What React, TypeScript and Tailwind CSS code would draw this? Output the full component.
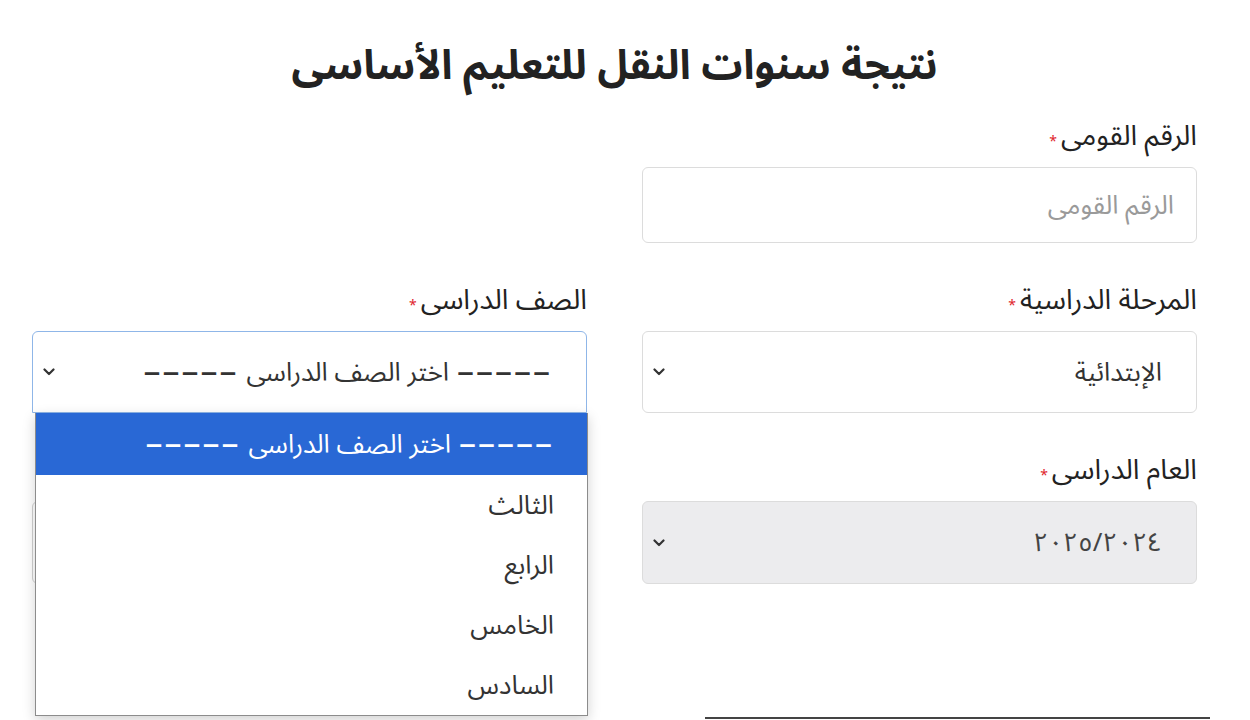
import React from "react";

const font = { fontFamily: '"Noto Sans Arabic", "DejaVu Sans", sans-serif' };

function Chevron() {
  return (
    <svg width="12" height="8" viewBox="0 0 12 8" className="shrink-0">
      <path d="M1.5 1.5 L6 6 L10.5 1.5" fill="none" stroke="#333" strokeWidth="2.2" strokeLinecap="round" strokeLinejoin="round" />
    </svg>
  );
}

function Label({ text }: { text: string }) {
  return (
    <div className="flex h-[36px] items-center gap-1 text-[28px] leading-[36px] text-[#222]">
      <span>{text}</span>
      <span className="mt-[10px] text-[14px] leading-none text-[#e0242c]">*</span>
    </div>
  );
}

function Placeholder() {
  return (
    <span className="flex items-center gap-2">
      <span className="text-[34px] leading-none tracking-[2px]">–––––</span>
      <span>اختر الصف الدراسى</span>
      <span className="text-[34px] leading-none tracking-[2px]">–––––</span>
    </span>
  );
}

const gradeOptions = ["الثالث", "الرابع", "الخامس", "السادس"];

export default function App() {
  return (
    <div className="min-h-[720px] w-[1250px] overflow-hidden bg-white" style={font}>
      <div className="ml-[32px] w-[1165px] pt-[36px]">
        <h1 dir="rtl" className="text-center text-[41px] font-bold leading-[60px] text-[#222]">
          نتيجة سنوات النقل للتعليم الأساسى
        </h1>

        <div dir="rtl" className="mt-[23px] grid grid-cols-2 gap-x-[55px] gap-y-[40px]">
          {/* national id */}
          <div>
            <Label text="الرقم القومى" />
            <div className="mt-3 flex h-[76px] items-center rounded-md border border-[#dcdcdc] bg-white pr-[22px] text-[26px] text-[#9a9a9a]">
              الرقم القومى
            </div>
          </div>
          <div />

          {/* stage */}
          <div>
            <Label text="المرحلة الدراسية" />
            <div className="mt-3 flex h-[82px] items-center justify-between rounded-md border border-[#dcdcdc] bg-white pl-[10px] pr-[34px] text-[26px] text-[#333]">
              <span>الإبتدائية</span>
              <Chevron />
            </div>
          </div>

          {/* grade, with its list open */}
          <div>
            <Label text="الصف الدراسى" />
            <div className="relative mt-3">
              <div className="flex h-[82px] items-center justify-between rounded-t-md border border-[#8fb6e8] bg-white pl-[10px] pr-[34px] text-[26px] text-[#333]">
                <Placeholder />
                <Chevron />
              </div>
              <div className="absolute left-[3px] right-[-1px] top-full z-10 border-x border-b border-[#8c8c8c] bg-white shadow-[0_4px_12px_rgba(0,0,0,0.18)]">
                <div className="flex h-[62px] items-center bg-[#2968d5] pr-[33px] text-[26px] text-white">
                  <Placeholder />
                </div>
                {gradeOptions.map((g) => (
                  <div key={g} className="flex h-[60px] items-center pr-[33px] text-[26px] text-[#333]">
                    {g}
                  </div>
                ))}
              </div>
            </div>
          </div>

          {/* year */}
          <div>
            <Label text="العام الدراسى" />
            <div className="mt-3 flex h-[83px] items-center justify-between rounded-md border border-[#dcdcdc] bg-[#ececee] pl-[10px] pr-[34px] text-[26px] text-[#444]">
              <span>٢٠٢٥/٢٠٢٤</span>
              <Chevron />
            </div>
          </div>
          <div className="pt-[48px]">
            <div className="h-[83px] rounded-md border border-[#d0d0d0] bg-white" />
          </div>
        </div>
      </div>

      <div className="ml-[705px] mt-[133px] h-[2px] w-[505px] bg-[#444]" />
    </div>
  );
}
